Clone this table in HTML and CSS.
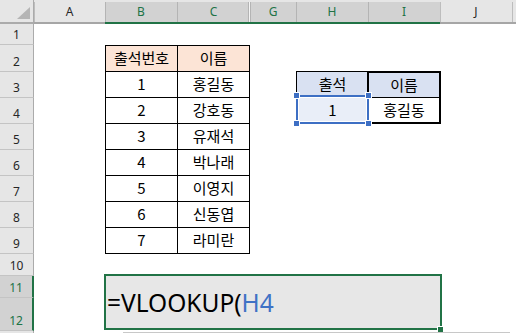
FILE: index.html
```html
<!DOCTYPE html>
<html lang="ko">
<head>
<meta charset="utf-8">
<title>VLOOKUP</title>
<link rel="stylesheet" href="styles.css">
</head>
<body>
<div class="sheet">
  <div class="corner"><svg width="34" height="22" viewBox="0 0 34 22"><polygon points="30,7 30,19 17,19" fill="#b5b5b5"/></svg></div>
  <div class="ch c-A">A</div>
  <div class="ch sel c-B">B</div>
  <div class="ch sel c-C hidden-after">C</div>
  <div class="ch sel c-G">G</div>
  <div class="ch sel c-H">H</div>
  <div class="ch sel c-I">I</div>
  <div class="ch c-J">J</div>
  <div class="ch c-R"></div>

  <div class="rh r1">1</div>
  <div class="rh r2">2</div>
  <div class="rh r3">3</div>
  <div class="rh r4">4</div>
  <div class="rh r5">5</div>
  <div class="rh r6">6</div>
  <div class="rh r7">7</div>
  <div class="rh r8">8</div>
  <div class="rh r9">9</div>
  <div class="rh r10">10</div>
  <div class="rh sel r11">11</div>
  <div class="rh sel r12">12</div>
  <div class="rh r13"></div>

  <div class="cell tb thead c-B r2">출석번호</div>
  <div class="cell tc thead c-C r2">이름</div>
  <div class="cell tb c-B r3">1</div><div class="cell tc c-C r3">홍길동</div>
  <div class="cell tb c-B r4">2</div><div class="cell tc c-C r4">강호동</div>
  <div class="cell tb c-B r5">3</div><div class="cell tc c-C r5">유재석</div>
  <div class="cell tb c-B r6">4</div><div class="cell tc c-C r6">박나래</div>
  <div class="cell tb c-B r7">5</div><div class="cell tc c-C r7">이영지</div>
  <div class="cell tb c-B r8">6</div><div class="cell tc c-C r8">신동엽</div>
  <div class="cell tb c-B r9">7</div><div class="cell tc c-C r9">라미란</div>

  <div class="cell h3 c-H r3">출석</div>
  <div class="cell i3 c-I r3">이름</div>
  <div class="cell h4 c-H r4">1
    <div class="refsel">
      <span class="hd tl"></span><span class="hd tr"></span><span class="hd bl"></span><span class="hd br"></span>
    </div>
  </div>
  <div class="cell i4 c-I r4">홍길동</div>

  <div class="edit"><span>=VLOOKUP(</span><span class="ref">H4</span><span class="fh"></span></div>
  <div class="hline"></div>
</div>
</body>
</html>
```
FILE: styles.css
```css
* { box-sizing: border-box; }
html, body { margin: 0; padding: 0; }
body {
  width: 516px;
  height: 333px;
  overflow: hidden;
  background: #fff;
  font-family: "Noto Sans CJK KR", "Noto Sans", sans-serif;
}
.sheet {
  display: grid;
  grid-template-columns: 34px 71px 72px 73px 46px 72px 72px 72px 1fr;
  grid-template-rows: 24px 21px 27px repeat(7, 26px) 22px 22px 33px 1fr;
  width: 516px;
  height: 333px;
}

/* column placement */
.c-A { grid-column: 2; }
.c-B { grid-column: 3; }
.c-C { grid-column: 4; }
.c-G { grid-column: 5; }
.c-H { grid-column: 6; }
.c-I { grid-column: 7; }
.c-J { grid-column: 8; }
.c-R { grid-column: 9; }

/* row placement */
.r1 { grid-row: 2; }
.r2 { grid-row: 3; }
.r3 { grid-row: 4; }
.r4 { grid-row: 5; }
.r5 { grid-row: 6; }
.r6 { grid-row: 7; }
.r7 { grid-row: 8; }
.r8 { grid-row: 9; }
.r9 { grid-row: 10; }
.r10 { grid-row: 11; }
.r11 { grid-row: 12; }
.r12 { grid-row: 13; }
.r13 { grid-row: 14; }

/* corner */
.corner {
  grid-row: 1;
  grid-column: 1;
  background: #e6e6e6;
  border-right: 1px solid #ababab;
  border-bottom: 2px solid #ababab;
}
.corner svg { display: block; }

/* column headers */
.ch {
  grid-row: 1;
  display: flex;
  align-items: center;
  justify-content: center;
  font-family: "Noto Sans", sans-serif;
  font-size: 12px;
  color: #262626;
  background:
    linear-gradient(#bdbdbd, #bdbdbd) 0 2px / 1px 20px no-repeat,
    #e6e6e6;
  border-bottom: 2px solid #a6a6a6;
  padding-top: 1px;
}
.ch.sel {
  color: #217346;
  background:
    linear-gradient(#b4b4b4, #b4b4b4) 0 2px / 1px 20px no-repeat,
    linear-gradient(#e6e6e6, #e6e6e6) 0 0 / 100% 2px no-repeat,
    #d2d2d2;
  border-bottom-color: #217346;
}
.ch.hidden-after {
  background:
    linear-gradient(#b4b4b4, #b4b4b4) 0 2px / 1px 20px no-repeat,
    linear-gradient(#b4b4b4, #b4b4b4) calc(100% - 1px) 2px / 1px 20px no-repeat,
    linear-gradient(#f4f4f4, #f4f4f4) 100% 2px / 1px 20px no-repeat,
    linear-gradient(#e6e6e6, #e6e6e6) 0 0 / 100% 2px no-repeat,
    #d2d2d2;
}

/* row headers */
.rh {
  grid-column: 1;
  display: flex;
  align-items: flex-end;
  justify-content: center;
  font-family: "Noto Sans", sans-serif;
  font-size: 12px;
  color: #262626;
  background: #e6e6e6;
  border-right: 1px solid #ababab;
  border-bottom: 1px solid #c4c4c4;
  padding-bottom: 1px;
}
.rh.sel {
  background: #d2d2d2;
  color: #217346;
  border-right: 2px solid #217346;
}
.rh.r13 { border-bottom: 0; }

/* cells */
.cell {
  display: flex;
  align-items: center;
  justify-content: center;
  font-size: 15px;
  color: #000;
  padding-bottom: 2px;
}
.tb {
  border-left: 1px solid #000;
  border-bottom: 1px solid #000;
}
.tc {
  border-left: 1px solid #000;
  border-right: 1px solid #000;
  border-bottom: 1px solid #000;
}
.thead {
  background: #fce4d6;
  border-top: 1px solid #000;
}

/* second table */
.h3 {
  margin-top: -1px;
  background: #d9e1f2;
  border-top: 1px solid #000;
  border-left: 1px solid #000;
  border-bottom: 1px solid #000;
}
.i3 {
  margin: -1px -1px 0 -1px;
  background: #d9e1f2;
  border: 2px solid #000;
  border-bottom: 1px solid #000;
}
.i4 {
  margin: 0 -1px 0 -1px;
  background: #fff;
  border: 2px solid #000;
  border-top: 0;
}
.h4 {
  position: relative;
  background: #e9eef8;
  border-left: 1px solid #000;
  border-bottom: 1px solid #000;
}
.refsel {
  position: absolute;
  top: -3px;
  left: -1px;
  right: -1px;
  bottom: -1px;
  border: 2px solid #3d6fc4;
  box-shadow: inset 0 0 0 1px #fff;
}
.hd {
  position: absolute;
  width: 5px;
  height: 5px;
  background: #3d6fc4;
  box-shadow: 0 0 0 1px #fff;
}
.hd.tl { left: -4px; top: -4px; }
.hd.tr { right: -4px; top: -4px; }
.hd.bl { left: -4px; bottom: -4px; }
.hd.br { right: -4px; bottom: -4px; }

/* in-cell edit box */
.edit {
  grid-column: 3 / 8;
  grid-row: 12 / 14;
  margin: -2px -2px 1px -1px;
  position: relative;
  display: flex;
  align-items: center;
  padding: 0 0 0 1px;
  background: #e7e7e7;
  border: 2px solid #217346;
  font-family: "Noto Sans", sans-serif;
  font-size: 24.5px;
  color: #000;
  white-space: pre;
}
.edit .ref { color: #3f72c5; }
.fh {
  position: absolute;
  right: -3px;
  bottom: -4px;
  width: 5px;
  height: 5px;
  background: #217346;
  box-shadow: -1px -1px 0 #fff;
}
.hline {
  grid-row: 14;
  grid-column: 3 / -1;
  align-self: end;
  height: 1px;
  margin: 0 6px 0 18px;
  background: #c8c8c8;
}
```
